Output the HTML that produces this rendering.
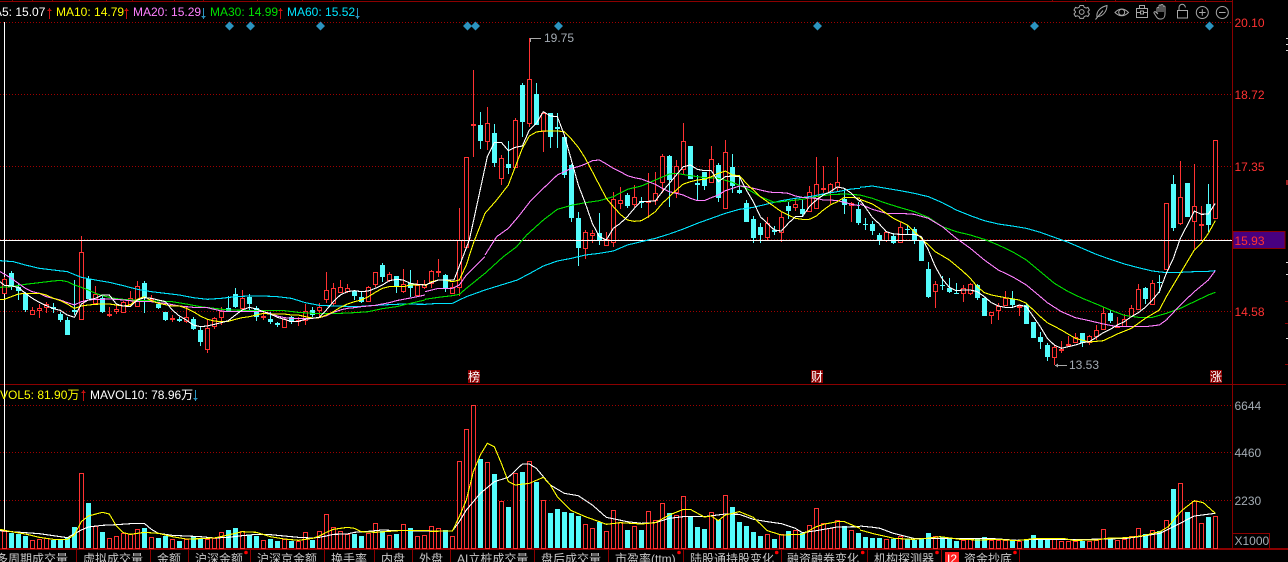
<!DOCTYPE html>
<html lang="zh-CN"><head><meta charset="utf-8"><title>K线图</title>
<style>
html,body{margin:0;padding:0;background:#000;width:1288px;height:562px;overflow:hidden}
svg{display:block;position:absolute;left:0;top:0}
text{font-family:"Liberation Sans","Noto Sans CJK SC",sans-serif;font-size:12px}
.l{fill:none;stroke-width:3.3;shape-rendering:crispEdges}
.w{stroke:#fff}.y{stroke:#ff0}.p{stroke:#ff80ff}.g{stroke:#00e000}.c{stroke:#00e5ff}
.ic{fill:none;stroke:#a8a8a8;stroke-width:1}
</style></head><body>
<svg width="1288" height="562" viewBox="0 0 1288 562" xmlns="http://www.w3.org/2000/svg">
<rect width="1288" height="562" fill="#000"/>
<!-- grid -->
<g stroke="#a00000" stroke-width="1" stroke-dasharray="1 2" shape-rendering="crispEdges">
<path d="M0 22.5H1232M0 94.5H1232M0 166.5H1232M0 239.5H1232M0 311.5H1232M0 405.5H1232M0 452.5H1232M0 500.5H1232"/>
</g>
<!-- frame -->
<g stroke="#8b0000" stroke-width="1" shape-rendering="crispEdges" fill="none">
<path d="M0 1.5H1232M1232.5 0V548M0 384.5H1286M0 548.5H1288M0 549.5H1288"/>
<path d="M12.5 0V1M32.5 0V1M52.5 0V1M79.5 0V1M106.5 0V1M132.5 0V1M174.5 0V1M203.5 0V1M257.5 0V1M302.5 0V1M333.5 0V1M1052.5 0V1M1085.5 0V1M1115.5 0V1M1145.5 0V1M1175.5 0V1M1205.5 0V1M1225.5 0V1"/>
<path d="M1285 301.5H1288M1285 323.5H1288M1285 364.5H1288"/>
<path d="M76.5 550V562M150.5 550V562M188.5 550V562M250.5 550V562M324.5 550V562M374.5 550V562M412.5 550V562M450.5 550V562M534.5 550V562M608.5 550V562M683.5 550V562M781.5 550V562M867.5 550V562M941.5 550V562M1019.5 550V562"/>
</g>
<path d="M1286 38.5H1288M1286 44.5H1288M1286 50.5H1288M1286 262.5H1288M1286 274.5H1288M1286 338.5H1288" stroke="#ddd" stroke-width="1" shape-rendering="crispEdges"/>
<rect x="1286" y="180" width="2" height="5" fill="#a02020"/>
<!-- left cursor line -->
<path d="M4.5 22V548" stroke="#fff" stroke-width="1" shape-rendering="crispEdges"/>
<!-- cyan wicks -->
<path stroke="#54fcfc" stroke-width="1" fill="none" shape-rendering="crispEdges" d="M11.5 271V290M18.5 283V300M25.5 292V312M53.5 303V313M60.5 312V322M67.5 317V335M74.5 280V315M88.5 276V299M102.5 295V313M144.5 281V313M158.5 302V309M165.5 312V321M179.5 317V322M193.5 317V330M200.5 327V346M228.5 296V312M235.5 288V308M249.5 294V310M256.5 306V321M270.5 312V324M277.5 322V327M291.5 316V324M312.5 307V317M354.5 290V300M361.5 292V303M382.5 263V282M396.5 276V293M410.5 270V297M445.5 274V292M480.5 112V149M494.5 124V167M508.5 141V174M522.5 83V137M536.5 83V125M550.5 113V148M557.5 113V148M564.5 135V178M571.5 164V222M578.5 212V266M599.5 213V245M627.5 193V208M641.5 197V208M669.5 155V207M690.5 146V179M697.5 175V200M704.5 172V190M718.5 163V202M732.5 154V193M739.5 175V194M746.5 200V222M753.5 216V243M760.5 223V243M774.5 226V235M788.5 202V219M802.5 200V217M844.5 189V214M858.5 202V225M865.5 218V230M872.5 221V235M879.5 233V245M893.5 233V244M907.5 225V235M914.5 227V244M921.5 241V261M928.5 262V298M942.5 276V290M949.5 278V293M956.5 283V294M977.5 284V300M984.5 298V316M1012.5 291V307M1026.5 304V324M1033.5 322V338M1040.5 332V349M1047.5 343V361M1082.5 333V347M1110.5 310V323M1145.5 287V304M1159.5 275V293M1173.5 175V231M1187.5 183V217M1208.5 184V232"/>
<!-- cyan bodies -->
<path stroke="#54fcfc" stroke-width="5" fill="none" shape-rendering="crispEdges" d="M11.5 273V287M18.5 287V291M25.5 293V310M53.5 307V309M60.5 314V320M67.5 320V335M74.5 310V312M88.5 279V299M102.5 298V312M144.5 283V298M158.5 304V308M165.5 312V320M179.5 319V321M193.5 319V329M200.5 330V342M228.5 308V311M235.5 294V307M249.5 297V304M256.5 308V317M270.5 319V322M277.5 323V325M291.5 317V322M312.5 310V315M354.5 291V296M361.5 297V302M382.5 265V277M396.5 276V287M410.5 283V288M445.5 275V289M480.5 125V141M494.5 133V163M508.5 164V168M522.5 85V122M536.5 94V125M550.5 113V137M557.5 127V129M564.5 137V175M571.5 165V218M578.5 218V248M599.5 233V241M627.5 195V206M641.5 201V203M669.5 156V180M690.5 146V179M697.5 183V185M704.5 172V186M718.5 165V198M732.5 167V186M739.5 190V193M746.5 203V222M753.5 219V238M760.5 227V235M774.5 230V232M788.5 206V211M802.5 209V214M844.5 199V205M858.5 209V223M865.5 224V225M872.5 224V231M879.5 235V240M893.5 236V243M907.5 229V230M914.5 229V240M921.5 241V261M928.5 269V297M942.5 285V286M949.5 288V292M956.5 293V294M977.5 285V298M984.5 298V316M1012.5 299V305M1026.5 305V324M1033.5 322V338M1040.5 337V342M1047.5 345V357M1082.5 333V343M1110.5 313V321M1145.5 288V299M1159.5 282V283M1173.5 184V228M1187.5 183V217M1208.5 204V225"/>
<!-- red wicks -->
<path stroke="#ff3232" stroke-width="1" fill="none" shape-rendering="crispEdges" d="M4.5 277V294M32.5 307V315M39.5 304V318M46.5 302V313M81.5 236V319M95.5 286V305M109.5 307V317M116.5 305V314M123.5 301V313M130.5 291V307M137.5 281V307M151.5 295V302M172.5 315V322M186.5 307V323M207.5 319V353M214.5 317V329M221.5 307V325M242.5 290V310M263.5 312V320M284.5 317V328M298.5 317V326M305.5 304V325M319.5 303V317M326.5 272V303M333.5 283V306M340.5 280V293M347.5 284V293M368.5 286V301M375.5 272V287M389.5 272V282M403.5 269V293M417.5 280V297M424.5 280V289M431.5 270V288M438.5 259V277M452.5 283V294M459.5 208V296M466.5 157V247M473.5 70V157M487.5 107V150M501.5 155V185M515.5 118V167M529.5 38V127M543.5 112V152M585.5 230V259M592.5 230V243M606.5 232V245M613.5 192V247M620.5 187V209M634.5 185V207M648.5 173V218M655.5 172V205M662.5 154V193M676.5 160V198M683.5 123V175M711.5 146V182M725.5 140V208M767.5 217V240M781.5 212V242M795.5 198V211M809.5 186V212M816.5 157V209M823.5 166V193M830.5 183V204M837.5 157V192M851.5 202V222M886.5 232V242M900.5 222V242M935.5 281V308M963.5 285V302M970.5 283V295M991.5 312V324M998.5 303V320M1005.5 291V305M1019.5 305V316M1054.5 345V365M1061.5 341V353M1068.5 336V346M1075.5 333V343M1089.5 335V345M1096.5 325V340M1103.5 307V330M1117.5 317V327M1124.5 314V327M1131.5 305V317M1138.5 284V310M1152.5 280V304M1166.5 203V269M1180.5 161V225M1194.5 164V249M1201.5 206V240M1215.5 140V218"/>
<!-- red bodies -->
<path stroke="#ff3232" stroke-width="1" fill="#000" shape-rendering="crispEdges" transform="translate(0,.5)" d="M2.5 279h4v14h-4zM30.5 310h4v4h-4zM37.5 308h4v2h-4zM44.5 304h4v3h-4zM79.5 252h4v67h-4zM93.5 294h4v9h-4zM107.5 314h4v1h-4zM114.5 309h4v2h-4zM121.5 302h4v10h-4zM128.5 298h4v6h-4zM135.5 286h4v20h-4zM149.5 299h4v1h-4zM170.5 318h4v1h-4zM184.5 317h4v4h-4zM205.5 328h4v21h-4zM212.5 318h4v8h-4zM219.5 311h4v6h-4zM240.5 298h4v10h-4zM261.5 316h4v1h-4zM282.5 319h4v8h-4zM296.5 320h4v1h-4zM303.5 311h4v9h-4zM317.5 307h4v3h-4zM324.5 290h4v9h-4zM331.5 288h4v15h-4zM338.5 287h4v5h-4zM345.5 288h4v3h-4zM366.5 287h4v14h-4zM373.5 272h4v12h-4zM387.5 274h4v6h-4zM401.5 284h4v7h-4zM415.5 285h4v10h-4zM422.5 284h4v3h-4zM429.5 271h4v12h-4zM436.5 271h4v1h-4zM450.5 287h4v6h-4zM457.5 240h4v47h-4zM464.5 157h4v90h-4zM471.5 124h4v1h-4zM485.5 123h4v18h-4zM499.5 158h4v20h-4zM513.5 120h4v47h-4zM527.5 79h4v44h-4zM541.5 113h4v18h-4zM583.5 232h4v16h-4zM590.5 233h4v2h-4zM604.5 239h4v6h-4zM611.5 199h4v43h-4zM618.5 200h4v3h-4zM632.5 197h4v7h-4zM646.5 201h4v1h-4zM653.5 193h4v7h-4zM660.5 156h4v26h-4zM674.5 166h4v26h-4zM681.5 141h4v28h-4zM709.5 159h4v23h-4zM723.5 152h4v56h-4zM765.5 223h4v14h-4zM779.5 217h4v15h-4zM793.5 204h4v3h-4zM807.5 192h4v19h-4zM814.5 184h4v24h-4zM821.5 188h4v1h-4zM828.5 184h4v8h-4zM835.5 182h4v5h-4zM849.5 203h4v2h-4zM884.5 232h4v8h-4zM898.5 227h4v15h-4zM933.5 284h4v7h-4zM961.5 288h4v5h-4zM968.5 284h4v9h-4zM989.5 312h4v3h-4zM996.5 306h4v4h-4zM1003.5 298h4v7h-4zM1017.5 306h4v1h-4zM1052.5 347h4v10h-4zM1059.5 349h4v1h-4zM1066.5 344h4v1h-4zM1073.5 337h4v5h-4zM1087.5 336h4v6h-4zM1094.5 330h4v6h-4zM1101.5 313h4v16h-4zM1115.5 326h4v1h-4zM1122.5 319h4v7h-4zM1129.5 308h4v8h-4zM1136.5 289h4v20h-4zM1150.5 283h4v21h-4zM1164.5 203h4v66h-4zM1178.5 197h4v26h-4zM1192.5 206h4v15h-4zM1199.5 224h4v1h-4zM1213.5 140h4v78h-4z"/>
<!-- price line -->
<path d="M0 240.5H1232" stroke="#fff" stroke-width="1" shape-rendering="crispEdges"/>
<!-- MA lines: left -->
<g transform="scale(.33333) translate(0,690)">
<polyline class="l c" points="0,92 40,95 76,105 118,115 160,120 202,125 244,142 286,150 328,157 370,167 412,178 454,185 496,190 538,195 580,203 622,208 664,205 706,200 748,198 790,198 832,200 874,205 916,218 958,226 1000,228 1042,229 1084,229 1126,226 1168,224 1210,222 1275,223"/>
<polyline class="l g" points="0,172 34,170 76,163 118,158 160,153 181,151 202,155 223,165 244,172 265,180 286,190 307,197 328,202 349,206 391,210 433,212 475,213 517,215 559,222 601,230 643,235 685,240 727,241 790,241 853,242 895,247 937,250 979,250 1021,250 1063,248 1105,245 1147,236 1189,230 1231,220 1275,210"/>
<polyline class="l p" points="0,125 13,132 34,145 55,160 76,175 97,185 118,190 139,200 160,205 181,210 202,218 223,225 244,215 265,210 286,208 307,208 328,207 349,208 370,210 391,212 412,215 433,215 454,215 475,218 496,220 517,224 538,228 559,230 580,232 601,232 622,233 643,238 664,243 685,245 706,245 727,245 748,244 769,244 790,245 811,250 832,258 853,263 874,265 895,265 916,265 937,265 958,263 979,257 1000,247 1021,240 1042,235 1063,233 1084,230 1105,228 1126,226 1147,222 1168,218 1189,212 1210,208 1231,204 1252,200 1275,195"/>
<polyline class="l y" points="0,208 13,208 34,200 55,192 76,190 97,190 118,190 139,195 160,205 181,212 202,222 223,235 244,228 265,225 286,223 307,222 328,222 349,225 370,228 391,225 412,208 433,200 454,212 475,220 496,224 517,228 538,228 559,235 580,245 601,258 622,268 643,273 664,275 685,274 706,268 727,263 748,260 769,255 790,250 811,252 832,252 853,252 874,255 895,255 916,260 937,264 958,263 979,255 1000,245 1021,232 1042,222 1063,215 1084,210 1105,200 1126,187 1147,175 1168,170 1189,170 1210,170 1231,165 1252,165 1275,163"/>
<polyline class="l w" points="0,155 13,166 34,168 55,172 76,190 97,205 118,217 139,227 160,236 181,241 202,255 223,262 244,222 265,210 286,205 307,195 328,195 349,222 370,228 391,230 412,210 433,203 454,205 475,210 496,215 517,240 538,258 559,270 580,285 601,290 622,288 643,283 664,278 685,272 706,255 727,240 748,232 769,237 790,245 811,252 832,262 853,268 874,275 895,274 916,268 937,265 958,262 979,240 1000,215 1021,195 1042,185 1063,182 1084,185 1105,183 1126,175 1147,165 1168,152 1189,148 1210,150 1231,160 1252,163 1275,165"/>
</g>
<!-- MA lines: bridge -->
<g transform="translate(425,200) scale(.33333)">
<polyline class="l c" points="0,313 40,310 82,310 103,300 124,290 180,270"/>
<polyline class="l g" points="0,298 40,292 82,287 103,283 124,265 180,220"/>
<polyline class="l p" points="0,275 40,265 82,265 103,255 124,225 180,170"/>
<polyline class="l y" points="0,258 19,245 40,240 60,240 82,245 103,240 124,195 145,130"/>
<polyline class="l w" points="0,255 19,248 40,240 60,240 87,240"/>
</g>
<!-- MA lines: middle -->
<g transform="translate(430,60) scale(.33333)">
<polyline class="l c" points="165,690 262,660 300,640 340,618 382,603 424,595 466,585 508,580 550,573 592,555 634,545 676,535 718,522 760,507 802,490 844,475 886,460 928,448 970,442 1012,432 1054,422 1096,415 1138,410 1180,402 1222,395 1264,387 1290,385"/>
<polyline class="l g" points="165,640 220,590 260,560 290,525 340,480 382,448 424,436 466,428 508,422 550,410 592,388 634,378 676,360 718,342 739,340 781,347 823,353 865,355 907,367 949,385 991,410 1033,427 1075,423 1117,418 1159,410 1201,404 1243,402 1290,405"/>
<polyline class="l p" points="165,585 200,530 235,505 265,470 300,425 340,385 382,345 403,335 424,325 445,320 466,312 487,302 508,300 529,312 550,325 571,335 592,347 613,353 634,357 655,365 676,373 697,385 718,395 739,400 760,405 781,415 802,422 823,422 844,413 865,405 886,392 907,385 928,378 949,380 970,385 991,390 1012,395 1033,398 1054,398 1075,400 1096,408 1117,412 1138,414 1159,415 1180,420 1201,420 1222,422 1243,427 1264,433 1290,437"/>
<polyline class="l y" points="130,550 165,460 200,420 235,375 256,320 277,265 298,228 319,216 340,213 361,213 382,213 403,215 424,237 445,262 466,295 487,335 508,375 529,415 550,440 571,463 592,480 613,484 634,482 655,470 676,455 697,430 718,410 739,390 760,372 781,365 802,360 823,358 844,350 865,340 886,333 907,345 928,347 949,370 970,390 991,410 1012,425 1033,440 1054,455 1075,465 1096,475 1117,478 1138,478 1159,468 1180,450 1201,435 1222,425 1243,412 1264,412 1290,415"/>
<polyline class="l w" points="72,660 95,600 118,540 144,420 172,290 193,247 214,247 235,272 256,262 277,258 298,210 319,190 340,155 361,168 382,170 403,225 424,300 445,375 466,430 487,490 508,530 529,540 550,505 571,490 592,470 613,445 634,424 655,424 676,423 697,395 718,370 739,345 760,320 781,315 802,328 823,332 844,332 865,365 886,350 907,348 928,350 949,390 970,425 991,470 1012,490 1033,510 1054,513 1075,490 1096,470 1117,470 1138,440 1159,420 1180,405 1201,395 1222,381 1243,385 1264,400 1290,425"/>
</g>
<!-- MA lines: right -->
<g transform="translate(860,130) scale(.33333)">
<polyline class="l c" points="0,172 37,168 79,175 121,182 163,190 205,200 247,218 289,240 331,257 373,272 415,282 457,288 499,295 541,307 583,322 625,337 667,355 709,373 751,388 793,402 835,413 877,423 919,428 961,427 1003,425 1045,424 1066,422"/>
<polyline class="l g" points="0,195 37,205 79,220 121,233 163,245 205,262 247,290 289,305 331,315 373,328 415,345 457,365 499,390 541,425 583,460 625,485 667,505 709,522 751,540 793,556 835,562 877,562 919,550 961,535 1003,515 1045,495 1066,487"/>
<polyline class="l p" points="0,222 37,238 79,250 121,250 163,253 205,265 247,290 289,325 331,355 373,390 415,420 457,440 499,465 541,500 562,518 604,545 646,563 688,572 730,582 772,590 814,590 856,590 898,585 919,570 961,525 1003,485 1045,450 1066,422"/>
<polyline class="l y" points="0,208 37,222 58,235 79,250 100,265 121,275 142,285 163,305 184,325 205,345 226,365 268,390 310,425 331,445 352,470 373,488 394,495 436,503 478,510 499,520 520,540 541,560 562,578 604,600 646,625 688,636 730,632 772,612 814,595 856,565 898,540 919,500 940,465 961,430 982,395 1003,360 1024,340 1045,310 1066,272"/>
<polyline class="l w" points="0,210 16,232 37,262 58,282 79,305 100,312 121,313 142,313 163,313 184,320 205,360 226,410 247,447 268,472 289,482 310,480 331,480 352,485 373,500 394,518 415,528 436,532 457,532 478,525 499,530 520,560 541,590 562,625 583,645 604,655 625,650 646,645 667,638 688,635 709,622 730,608 751,598 772,585 793,575 814,560 835,548 856,532 877,510 898,485 919,430 940,385 961,325 982,285 1003,243 1024,253 1045,252 1066,220"/>
</g>
<!-- volume cyan -->
<path stroke="#54fcfc" stroke-width="5" fill="none" shape-rendering="crispEdges" d="M11.5 533V548M18.5 534V548M25.5 536V548M53.5 540V548M60.5 540V548M67.5 537V548M74.5 527V548M88.5 503V548M102.5 532V548M144.5 528V548M158.5 538V548M165.5 536V548M179.5 541V548M193.5 537V548M200.5 539V548M228.5 530V548M235.5 528V548M249.5 535V548M256.5 536V548M270.5 539V548M277.5 541V548M291.5 541V548M312.5 540V548M354.5 534V548M361.5 536V548M382.5 531V548M396.5 534V548M410.5 528V548M445.5 530V548M480.5 459V548M494.5 474V548M508.5 507V548M522.5 472V548M536.5 482V548M550.5 513V548M557.5 509V548M564.5 512V548M571.5 513V548M578.5 516V548M599.5 522V548M627.5 530V548M641.5 530V548M669.5 513V548M690.5 517V548M697.5 527V548M704.5 529V548M718.5 520V548M732.5 507V548M739.5 522V548M746.5 526V548M753.5 532V548M760.5 536V548M774.5 539V548M788.5 531V548M802.5 533V548M844.5 526V548M858.5 533V548M865.5 537V548M872.5 538V548M879.5 538V548M893.5 539V548M907.5 539V548M914.5 540V548M921.5 539V548M928.5 533V548M942.5 537V548M949.5 539V548M956.5 541V548M977.5 539V548M984.5 537V548M1012.5 540V548M1026.5 540V548M1033.5 535V548M1040.5 539V548M1047.5 539V548M1082.5 541V548M1110.5 538V548M1145.5 534V548M1159.5 531V548M1173.5 489V548M1187.5 512V548M1208.5 517V548"/>
<!-- volume red -->
<path stroke="#ff3232" stroke-width="1" fill="#000" shape-rendering="crispEdges" transform="translate(0,.5)" d="M2.5 531h4V548h-4zM30.5 540h4V548h-4zM37.5 539h4V548h-4zM44.5 538h4V548h-4zM79.5 473h4V548h-4zM93.5 526h4V548h-4zM107.5 538h4V548h-4zM114.5 536h4V548h-4zM121.5 533h4V548h-4zM128.5 534h4V548h-4zM135.5 529h4V548h-4zM149.5 537h4V548h-4zM170.5 539h4V548h-4zM184.5 539h4V548h-4zM205.5 539h4V548h-4zM212.5 538h4V548h-4zM219.5 532h4V548h-4zM240.5 531h4V548h-4zM261.5 540h4V548h-4zM282.5 539h4V548h-4zM296.5 541h4V548h-4zM303.5 532h4V548h-4zM317.5 531h4V548h-4zM324.5 514h4V548h-4zM331.5 527h4V548h-4zM338.5 531h4V548h-4zM345.5 534h4V548h-4zM366.5 533h4V548h-4zM373.5 523h4V548h-4zM387.5 535h4V548h-4zM401.5 524h4V548h-4zM415.5 536h4V548h-4zM422.5 535h4V548h-4zM429.5 526h4V548h-4zM436.5 528h4V548h-4zM450.5 536h4V548h-4zM457.5 461h4V548h-4zM464.5 429h4V548h-4zM471.5 405h4V548h-4zM485.5 462h4V548h-4zM499.5 501h4V548h-4zM513.5 473h4V548h-4zM527.5 461h4V548h-4zM541.5 500h4V548h-4zM583.5 524h4V548h-4zM590.5 528h4V548h-4zM604.5 531h4V548h-4zM611.5 510h4V548h-4zM618.5 522h4V548h-4zM632.5 526h4V548h-4zM646.5 511h4V548h-4zM653.5 520h4V548h-4zM660.5 503h4V548h-4zM674.5 515h4V548h-4zM681.5 496h4V548h-4zM709.5 512h4V548h-4zM723.5 495h4V548h-4zM765.5 534h4V548h-4zM779.5 534h4V548h-4zM793.5 530h4V548h-4zM807.5 525h4V548h-4zM814.5 508h4V548h-4zM821.5 523h4V548h-4zM828.5 528h4V548h-4zM835.5 520h4V548h-4zM849.5 530h4V548h-4zM884.5 539h4V548h-4zM898.5 536h4V548h-4zM933.5 536h4V548h-4zM961.5 540h4V548h-4zM968.5 539h4V548h-4zM989.5 540h4V548h-4zM996.5 540h4V548h-4zM1003.5 540h4V548h-4zM1017.5 541h4V548h-4zM1052.5 539h4V548h-4zM1059.5 541h4V548h-4zM1066.5 541h4V548h-4zM1073.5 541h4V548h-4zM1087.5 541h4V548h-4zM1094.5 540h4V548h-4zM1101.5 529h4V548h-4zM1115.5 540h4V548h-4zM1122.5 539h4V548h-4zM1129.5 536h4V548h-4zM1136.5 528h4V548h-4zM1150.5 530h4V548h-4zM1164.5 520h4V548h-4zM1178.5 483h4V548h-4zM1192.5 501h4V548h-4zM1199.5 523h4V548h-4zM1213.5 516h4V548h-4z"/>
<!-- vol MA -->
<g transform="translate(0,440) scale(.33333)">
<polyline class="l w" points="0,272 34,275 76,278 118,281 160,287 202,293 244,270 265,261 307,256 349,254 391,251 433,250 454,268 475,280 517,286 559,288 601,290 643,294 685,292 727,287 769,283 811,284 853,288 895,292 937,294 958,292 979,288 1000,283 1042,282 1063,277 1105,274 1147,270 1189,272 1231,272 1290,273"/>
<polyline class="l y" points="0,268 34,275 76,282 118,292 160,298 202,298 223,285 244,245 265,228 307,217 328,222 349,258 370,278 391,283 433,277 475,280 517,290 559,297 601,296 643,294 685,285 727,275 769,277 811,290 853,297 895,301 937,295 958,288 979,277 1000,268 1042,262 1063,265 1084,275 1126,277 1168,274 1210,271 1252,272 1290,272"/>
</g>
<g transform="translate(430,400) scale(.33333)">
<polyline class="l w" points="0,393 67,393 88,365 109,330 151,280 193,245 235,232 277,192 298,192 319,205 361,255 403,280 445,287 487,315 529,352 592,365 634,370 676,368 718,355 760,350 823,350 886,342 928,343 970,358 1012,365 1054,371 1096,385 1117,398 1159,392 1222,381 1290,380"/>
<polyline class="l y" points="0,394 67,393 88,350 109,300 130,215 151,165 172,130 193,140 214,190 235,245 256,255 298,250 340,232 361,255 382,290 424,332 466,350 508,365 529,373 571,368 634,372 676,368 718,345 760,328 781,328 823,351 844,348 865,362 886,345 928,335 970,352 1012,392 1054,405 1117,403 1159,380 1180,373 1222,365 1243,365 1290,385"/>
</g>
<g transform="translate(860,440) scale(.33333)">
<polyline class="l w" points="0,258 40,262 60,265 100,280 160,295 240,295 300,296 400,296 470,301 530,298 640,299 740,297 800,295 850,288 900,280 950,255 1003,228 1066,220"/>
<polyline class="l y" points="0,270 40,281 80,290 100,295 160,298 200,295 240,290 300,298 360,300 410,298 470,302 530,295 610,295 640,301 710,300 740,295 800,293 850,287 900,275 925,260 945,235 965,212 1003,182 1030,188 1066,220"/>
</g>
<!-- diamonds -->
<g fill="#2b94c0">
<path d="M229.500 21.500l4.500 4.500-4.500 4.500-4.500-4.500zM250.500 21.500l4.500 4.500-4.500 4.500-4.500-4.500zM320.500 21.500l4.500 4.500-4.500 4.500-4.500-4.500zM467.500 21.500l4.500 4.500-4.500 4.500-4.500-4.500zM475.500 21.500l4.500 4.500-4.500 4.500-4.500-4.500zM558.500 21.500l4.500 4.500-4.500 4.500-4.500-4.500zM817.500 21.500l4.500 4.500-4.500 4.500-4.500-4.500zM1034.500 21.500l4.500 4.500-4.500 4.500-4.500-4.500zM1209.500 21.500l4.500 4.500-4.500 4.500-4.500-4.500z"/>
</g>
<!-- header -->
<g>
<text x="-16" y="16" fill="#fff">MA5: 15.07</text>
<text x="56" y="16" fill="#ff0">MA10: 14.79</text>
<text x="133" y="16" fill="#ff80ff">MA20: 15.29</text>
<text x="210" y="16" fill="#00e000">MA30: 14.99</text>
<text x="287" y="16" fill="#00e5ff">MA60: 15.52</text>
<text x="0" y="399" fill="#ff0">VOL5: 81.90万</text>
<text x="90" y="399" fill="#fff">MAVOL10: 78.96万</text>
</g>
<!-- trend arrows -->
<g fill="none" stroke-width="1" shape-rendering="crispEdges">
<path stroke="#c81010" d="M49.500 8V19M47.500 10.500h4M48.500 9.500h2M126.500 8V19M124.500 10.500h4M125.500 9.500h2M280.500 8V19M278.500 10.500h4M279.500 9.500h2M83.500 390V401M81.500 392.500h4M82.500 391.500h2"/>
<path stroke="#2b94c0" d="M203.500 8V19M201.500 16.500h4M202.500 17.500h2M357.500 8V19M355.500 16.500h4M356.500 17.500h2M195.500 390V401M193.500 398.500h4M194.500 399.500h2"/>
</g>
<!-- price labels -->
<rect x="1233" y="231.5" width="52" height="17" fill="#480080" stroke="#8b0000" stroke-width="1"/>
<g fill="#ff3232">
<text x="1234.5" y="27">20.10</text><text x="1234.5" y="99">18.72</text><text x="1234.5" y="171">17.35</text><text x="1234.5" y="245">15.93</text><text x="1234.5" y="316">14.58</text>
</g>
<g fill="#a4acb4">
<text x="1234.5" y="410">6644</text><text x="1234.5" y="457">4460</text><text x="1234.5" y="505">2230</text><text x="1234.5" y="545">X1000</text>
</g>
<rect x="1232.5" y="533.5" width="37" height="15" fill="none" stroke="#8b0000" stroke-width="1"/>
<!-- hi/lo -->
<path d="M530.5 42V38.5H541" stroke="#a8a8a8" stroke-width="1" fill="none" shape-rendering="crispEdges"/>
<path d="M1055 365.5H1067" stroke="#a8a8a8" stroke-width="1" shape-rendering="crispEdges"/>
<path d="M1055 365.5l3-2v4z" fill="#a8a8a8"/>
<text x="544" y="42" fill="#a4acb4">19.75</text>
<text x="1069" y="369" fill="#a4acb4">13.53</text>
<!-- event labels -->
<rect x="468" y="370" width="12" height="13" fill="#8b0000"/><text x="468" y="381" fill="#fff">榜</text>
<rect x="811" y="370" width="12" height="13" fill="#8b0000"/><text x="811" y="381" fill="#fff">财</text>
<rect x="1210" y="370" width="12" height="13" fill="#8b0000"/><text x="1210" y="381" fill="#fff">涨</text>
<!-- toolbar icons -->
<g class="ic">
<path d="M1080 6.5h3.4l.8 1.8 1.9.8 1.8-.7 1.5 2.6-1.4 1.5 0 .9 1.4 1.5-1.5 2.6-1.8-.7-1.9.8-.8 1.8h-3.4l-.8-1.8-1.9-.8-1.8.7-1.5-2.6 1.4-1.5 0-.9-1.4-1.5 1.5-2.6 1.8.7 1.9-.8z" transform="translate(0,-1)"/>
<circle cx="1081.7" cy="12" r="2.4"/>
<path d="M1097 17C1096 11 1101 7 1107 5.5 1107 11 1103 16 1098.500 16.500M1095.500 19.500L1103 10.500"/>
<path d="M1115 12.500Q1121.700 5.500 1128.500 12.500 1121.700 19 1115 12.500z"/>
<circle cx="1121.700" cy="12.300" r="3"/>
<path d="M1136.500 8.500h11v9h-11zM1139.500 8.500V5.500h5v3M1136.500 12.500h4M1143.500 12.500h4M1140.500 11h3v3h-3z"/>
<path d="M1157 13V8.500a1 1 0 0 1 2 0V12M1159 12V6a1 1 0 0 1 2 0v6M1161 12V5.500a1 1 0 0 1 2 0V12M1163 12V7a1 1 0 0 1 2 0v7c0 3-1.500 5-4 5h-1c-2 0-3-1-4-3l-2-3a1 1 0 0 1 1.700-1l2.300 2"/>
<path d="M1177.500 10.500h10v7.500h-10zM1179 10V7.500a3.200 3.200 0 0 1 6.400 0"/>
<circle cx="1202.300" cy="12.500" r="6"/><path d="M1199 12.500h6.600M1202.300 9.200v6.600"/>
<circle cx="1222.300" cy="12.500" r="6"/><path d="M1219 12.500h6.600"/>
</g>
<!-- tabs -->
<g fill="#c8c8c8">
<text x="-4" y="563">多周期成交量</text>
<text x="83" y="563">虚拟成交量</text>
<text x="157" y="563">金额</text>
<text x="195" y="563">沪深金额</text>
<text x="257" y="563">沪深京金额</text>
<text x="331" y="563">换手率</text>
<text x="381" y="563">内盘</text>
<text x="419" y="563">外盘</text>
<text x="457" y="563">AI立桩成交量</text>
<text x="541" y="563">盘后成交量</text>
<text x="615" y="563">市盈率(ttm)</text>
<text x="690" y="563">陆股通持股变化</text>
<text x="787" y="563">融资融券变化</text>
<text x="874" y="563">机构探测器</text>
<rect x="945" y="552" width="14" height="10" fill="#ff2020"/>
<text x="947" y="563" fill="#fff">I2</text>
<text x="964" y="563">资金抄底</text>
</g>
<g fill="#ff0000">
<circle cx="246" cy="552.500" r="1.800"/><circle cx="679" cy="552.500" r="1.800"/><circle cx="776.700" cy="552.500" r="1.800"/><circle cx="862.700" cy="552.500" r="1.800"/><circle cx="937" cy="552.500" r="1.800"/><circle cx="1015" cy="552.500" r="1.800"/>
</g>
</svg>
</body></html>
